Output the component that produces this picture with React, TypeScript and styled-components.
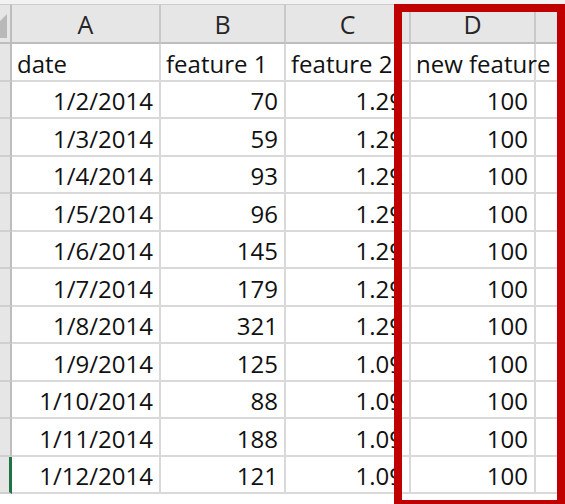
import React from "react";
import styled, { createGlobalStyle } from "styled-components";

const GlobalStyle = createGlobalStyle`
  html, body { margin: 0; padding: 0; background: #ffffff; overflow: hidden; }
  * { box-sizing: border-box; }
`;

const Sheet = styled.div`
  position: relative;
  width: 565px;
  height: 504px;
  overflow: hidden;
  background: #ffffff;
  border-top: 4px solid #f2f2f2;
  font-family: "Open Sans", "Noto Sans", sans-serif;
`;

const Grid = styled.div`
  display: grid;
  grid-template-columns: 12px 149px 125px 125px 125px 1fr;
  grid-template-rows: 40px repeat(12, 37.5px);
`;

const HeaderBase = styled.div`
  background: #e6e6e6;
  border-top: 1px solid #cdcdcd;
  border-bottom: 2px solid #bdbdbd;
  border-right: 2px solid #c9c9c9;
`;

const CornerCell = styled(HeaderBase)`
  position: relative;
  border-right: 2px solid #bdbdbd;
  svg { position: absolute; left: 0; top: 0; }
`;

const ColHeader = styled(HeaderBase)`
  display: flex;
  align-items: center;
  justify-content: center;
  padding-top: 1px;
  font-size: 25px;
  color: #262626;
`;

const RowHeader = styled.div<{ $selected?: boolean }>`
  background: #e6e6e6;
  border-bottom: 2px solid #cfcfcf;
  border-right: ${(p) => (p.$selected ? "3px solid #217346" : "2px solid #bdbdbd")};
`;

const Cell = styled.div<{ $align?: "left" | "right"; $clip?: boolean }>`
  display: flex;
  align-items: center;
  justify-content: ${(p) => (p.$align === "right" ? "flex-end" : "flex-start")};
  padding: 3px 6px 0 5px;
  border-right: 2px solid #d9d9d9;
  border-bottom: 2px solid #d9d9d9;
  font-size: 24px;
  color: #111111;
  white-space: nowrap;
  overflow: ${(p) => (p.$clip ? "hidden" : "visible")};
`;

const EmptyCell = styled.div`
  border-bottom: 2px solid #d9d9d9;
`;

const Highlight = styled.div`
  position: absolute;
  left: 394px;
  top: -4px;
  width: 171px;
  height: 508px;
  border: 8px solid #c00000;
  border-top-width: 12px;
  pointer-events: none;
`;

const dates = [
  "1/2/2014", "1/3/2014", "1/4/2014", "1/5/2014", "1/6/2014", "1/7/2014",
  "1/8/2014", "1/9/2014", "1/10/2014", "1/11/2014", "1/12/2014",
];
const f1 = [70, 59, 93, 96, 145, 179, 321, 125, 88, 188, 121];
const f2 = ["1.29", "1.29", "1.29", "1.29", "1.29", "1.29", "1.29", "1.09", "1.09", "1.09", "1.09"];

export default function App() {
  return (
    <>
      <GlobalStyle />
      <Sheet>
        <Grid>
          <CornerCell>
            <svg width="10" height="38" viewBox="0 0 10 38">
              <polygon points="7,9 7,33 0,33 0,16" fill="#b9b9b9" />
            </svg>
          </CornerCell>
          <ColHeader>A</ColHeader>
          <ColHeader>B</ColHeader>
          <ColHeader>C</ColHeader>
          <ColHeader>D</ColHeader>
          <ColHeader />

          <RowHeader />
          <Cell $clip>date</Cell>
          <Cell $clip>feature 1</Cell>
          <Cell $clip>feature 2</Cell>
          <Cell>new feature</Cell>
          <EmptyCell />

          {dates.map((d, i) => (
            <React.Fragment key={d}>
              <RowHeader $selected={i === dates.length - 1} />
              <Cell $align="right">{d}</Cell>
              <Cell $align="right">{f1[i]}</Cell>
              <Cell $align="right">{f2[i]}</Cell>
              <Cell $align="right">100</Cell>
              <EmptyCell />
            </React.Fragment>
          ))}
        </Grid>
        <Highlight />
      </Sheet>
    </>
  );
}
